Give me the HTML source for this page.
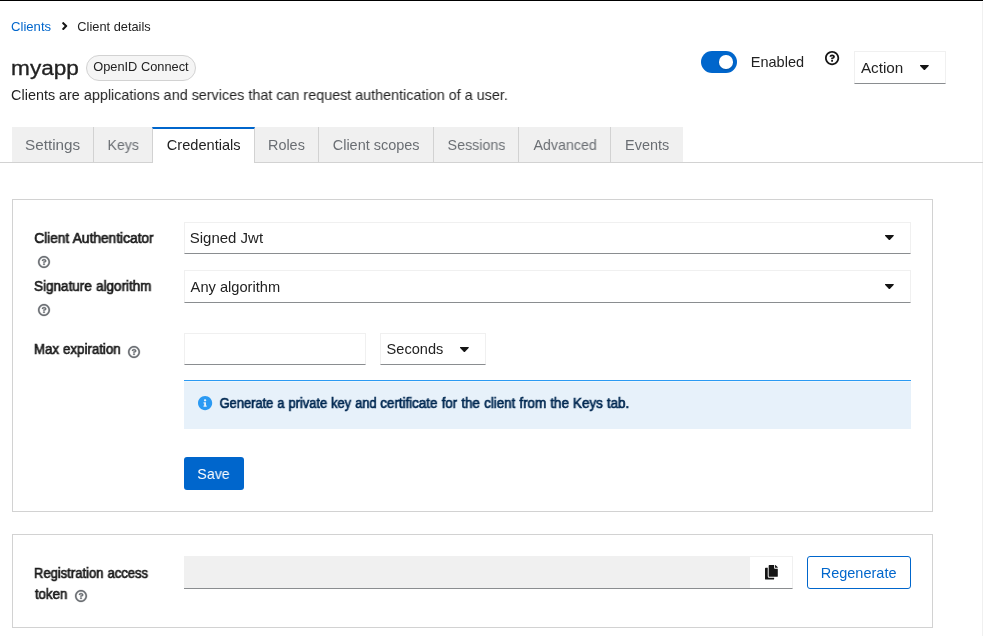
<!DOCTYPE html>
<html lang="en">
<head>
<meta charset="utf-8">
<title>Client details</title>
<style>
html,body{margin:0;padding:0;}
body{width:983px;height:636px;position:relative;overflow:hidden;background:#fff;font-family:"Liberation Sans",sans-serif;}
.t{position:absolute;white-space:nowrap;line-height:20px;transform-origin:0 0;will-change:transform;}
h1.t,p.t{margin:0;font-weight:400;}
a.t{text-decoration:none;cursor:pointer;}
.b,.i{position:absolute;box-sizing:border-box;}
.i{display:block;overflow:visible;}
.card{border:1px solid #d2d2d2;background:#fff;}
.fc{border:1px solid #f0f0f0;border-bottom:1px solid #8a8d90;background:#fff;}
.tab{background:#f0f0f0;top:127px;height:35px;border-left:1px solid #d2d2d2;}
</style>
</head>
<body>
<div class="b" style="left:0;top:0;width:983px;height:1px;background:#000"></div>
<div class="b" style="left:982px;top:2px;width:1px;height:634px;background:#f0f0f0"></div>

<!-- breadcrumb -->
<a class="t" id="bc1" style="left:9px;top:17px;padding-left:1.93px;font-size:12.2px;color:#0066cc;transform:scaleX(1.0741);">Clients</a>
<svg class="i" style="left:61.7px;top:22.1px" width="5.4" height="8.1" viewBox="24 95 208 322"><path fill="#151515" d="M224.300 273l-136 136c-9.400 9.400-24.600 9.400-33.900 0l-22.600-22.600c-9.400-9.400-9.400-24.600 0-33.900l96.400-96.400-96.400-96.400c-9.400-9.400-9.400-24.600 0-33.900L54.300 103c9.400-9.400 24.600-9.400 33.900 0l136 136c9.500 9.400 9.500 24.600.1 34z"/></svg>
<span class="t" id="bc2" style="left:76px;top:17px;padding-left:1.31px;font-size:12.2px;color:#222222;transform:scaleX(1.0508);">Client details</span>

<!-- title -->
<h1 class="t" id="ttl" style="left:9px;top:58px;padding-left:1.80px;font-size:19.6px;color:#222222;transform:scaleX(1.1535);-webkit-text-stroke:0.3px #222222;">myapp</h1>
<div class="b" style="left:86px;top:55px;width:110px;height:26px;border:1px solid #d2d2d2;border-radius:13px;background:#f5f5f5"></div>
<span class="t" id="bdg" style="left:92px;top:57px;padding-left:1.18px;font-size:12.2px;color:#222222;transform:scaleX(1.0505);">OpenID Connect</span>
<p class="t" id="dsc" style="left:10px;top:85px;padding-left:1.10px;font-size:14.4px;color:#222222;transform:scaleX(0.9983);">Clients are applications and services that can request authentication of a user.</p>

<!-- toggle -->
<div class="b" style="left:701px;top:51px;width:36px;height:21.5px;border-radius:11px;background:#0066cc"></div>
<div class="b" style="left:719.2px;top:55.3px;width:13.4px;height:13.4px;border-radius:50%;background:#fff;box-shadow:0 1px 2px rgba(3,3,3,.2)"></div>
<span class="t" id="enb" style="left:749px;top:52px;padding-left:1.72px;font-size:14.4px;color:#222222;transform:scaleX(1.0093);">Enabled</span>
<svg class="i" style="left:825.10px;top:51.00px" width="14.2" height="14.2" viewBox="0 0 1024 1024"><path fill="#151515" stroke="#151515" stroke-width="0" d="M521.3,576 C627.5,576 713.7,502 713.7,413.700 C713.700,325.400 627.600,253.600 521.300,253.600 C366,253.600 334.500,337.700 329.200,407.200 C329.200,414.300 335.200,416 343.500,416 L445,416 C450.500,416 458,415.500 460.800,406.500 C460.800,362.600 582.900,357.100 582.900,413.600 C582.900,441.900 556.200,470.900 521.300,473 C486.400,475.100 447.300,479.800 447.300,521.700 L447.300,553.800 C447.300,570.800 456.100,576 472,576 C487.900,576 521.300,576 521.300,576 M575.300,751.300 L575.300,655.300 C575.300,649.500 569.500,639.300 559.300,639.300 L463.300,639.300 C456.700,639.300 447.300,646.600 447.300,655.300 L447.300,751.300 C447.300,760.900 455.600,767.300 463.300,767.300 L559.300,767.300 C566.600,767.300 575.300,760.800 575.300,751.300 M512,896 C300.200,896 128,723.900 128,512 C128,300.300 300.200,128 512,128 C723.800,128 896,300.200 896,512 C896,723.800 723.700,896 512,896 M512.100,0 C229.700,0 0,229.800 0,512 C0,794.200 229.800,1024 512.100,1024 C794.400,1024 1024,794.300 1024,512 C1024,229.700 794.400,0 512.100,0"/></svg>

<!-- action dropdown -->
<div class="b fc" style="left:854px;top:51px;width:92px;height:33px"></div>
<span class="t" id="act" style="left:859px;top:58px;padding-left:1.81px;font-size:14.4px;color:#222222;transform:scaleX(1.0610);">Action</span>
<svg class="i" style="left:919.9px;top:65.35px" width="8.8" height="5.1" viewBox="13 190 294 172"><path fill="#151515" d="M31.3 192h257.3c17.8 0 26.7 21.5 14.1 34.1L174.1 354.8c-7.800 7.800-20.500 7.800-28.300 0L17.200 226.100C4.600 213.500 13.500 192 31.300 192z"/></svg>

<!-- tabs -->
<div class="b" style="left:0;top:162px;width:983px;height:1px;background:#d2d2d2"></div>
<div class="b tab" style="left:12px;width:81px;border-left:0"></div>
<div class="b tab" style="left:93px;width:59px"></div>
<div class="b tab" style="left:254px;width:64px"></div>
<div class="b tab" style="left:318px;width:115px"></div>
<div class="b tab" style="left:433px;width:85px"></div>
<div class="b tab" style="left:518px;width:92px"></div>
<div class="b tab" style="left:610px;width:73px"></div>
<div class="b" style="left:152px;top:127px;width:103px;height:36px;background:#fff;border-left:1px solid #d2d2d2;border-right:1px solid #d2d2d2;border-top:2px solid #0066cc"></div>
<span class="t" id="tb1" style="left:24px;top:135px;padding-left:1.03px;font-size:14.4px;color:#6a6e73;transform:scaleX(1.0602);">Settings</span><span class="t" id="tb2" style="left:106px;top:135px;padding-left:1.61px;font-size:14.4px;color:#6a6e73;transform:scaleX(0.9762);">Keys</span><span class="t" id="tb3" style="left:165px;top:135px;padding-left:1.71px;font-size:14.4px;color:#222222;transform:scaleX(1.0157);">Credentials</span><span class="t" id="tb4" style="left:267px;top:135px;padding-left:1.04px;font-size:14.4px;color:#6a6e73;transform:scaleX(0.9995);">Roles</span><span class="t" id="tb5" style="left:331px;top:135px;padding-left:1.75px;font-size:14.4px;color:#6a6e73;transform:scaleX(1.0045);">Client scopes</span><span class="t" id="tb6" style="left:446px;top:135px;padding-left:1.55px;font-size:14.4px;color:#6a6e73;transform:scaleX(0.9908);">Sessions</span><span class="t" id="tb7" style="left:532px;top:135px;padding-left:1.53px;font-size:14.4px;color:#6a6e73;transform:scaleX(0.9894);">Advanced</span><span class="t" id="tb8" style="left:624px;top:135px;padding-left:1.11px;font-size:14.4px;color:#6a6e73;transform:scaleX(1.0023);">Events</span>

<!-- card 1 -->
<div class="b card" style="left:12px;top:199px;width:921px;height:313px"></div>
<label class="t" id="lb1" style="left:33px;top:228px;padding-left:1.14px;font-size:14.0px;color:#1c1c1c;transform:scaleX(0.9803);-webkit-text-stroke:0.7px #1c1c1c;word-spacing:0.5px;">Client Authenticator</label>
<svg class="i" style="left:38.10px;top:255.90px" width="12" height="12" viewBox="0 0 1024 1024"><path fill="#6a6e73" stroke="#6a6e73" stroke-width="22" d="M521.3,576 C627.5,576 713.7,502 713.7,413.700 C713.700,325.400 627.600,253.600 521.300,253.600 C366,253.600 334.500,337.700 329.200,407.200 C329.200,414.300 335.200,416 343.500,416 L445,416 C450.500,416 458,415.500 460.800,406.500 C460.800,362.600 582.900,357.100 582.900,413.600 C582.900,441.900 556.200,470.900 521.300,473 C486.400,475.100 447.300,479.800 447.300,521.700 L447.300,553.800 C447.300,570.800 456.100,576 472,576 C487.900,576 521.300,576 521.300,576 M575.300,751.300 L575.300,655.300 C575.300,649.500 569.500,639.300 559.300,639.300 L463.300,639.300 C456.700,639.300 447.300,646.600 447.300,655.300 L447.300,751.300 C447.300,760.900 455.600,767.300 463.300,767.300 L559.300,767.300 C566.600,767.300 575.300,760.800 575.300,751.300 M512,896 C300.200,896 128,723.900 128,512 C128,300.300 300.200,128 512,128 C723.800,128 896,300.200 896,512 C896,723.800 723.700,896 512,896 M512.100,0 C229.700,0 0,229.800 0,512 C0,794.200 229.800,1024 512.100,1024 C794.400,1024 1024,794.300 1024,512 C1024,229.700 794.400,0 512.100,0"/></svg>
<div class="b fc" style="left:184px;top:222px;width:727px;height:32px"></div>
<span class="t" id="sl1" style="left:188px;top:228px;padding-left:1.72px;font-size:14.4px;color:#222222;transform:scaleX(1.0412);">Signed Jwt</span>
<svg class="i" style="left:884.9px;top:235.25px" width="8.8" height="5.1" viewBox="13 190 294 172"><path fill="#151515" d="M31.3 192h257.3c17.8 0 26.7 21.5 14.1 34.1L174.1 354.8c-7.800 7.800-20.500 7.800-28.300 0L17.200 226.100C4.600 213.500 13.500 192 31.300 192z"/></svg>
<label class="t" id="lb2" style="left:33px;top:276px;padding-left:1.10px;font-size:14.0px;color:#1c1c1c;transform:scaleX(0.9632);-webkit-text-stroke:0.7px #1c1c1c;word-spacing:0.5px;">Signature algorithm</label>
<svg class="i" style="left:38.10px;top:303.90px" width="12" height="12" viewBox="0 0 1024 1024"><path fill="#6a6e73" stroke="#6a6e73" stroke-width="22" d="M521.3,576 C627.5,576 713.7,502 713.7,413.700 C713.700,325.400 627.600,253.600 521.300,253.600 C366,253.600 334.500,337.700 329.200,407.200 C329.200,414.300 335.200,416 343.500,416 L445,416 C450.500,416 458,415.500 460.800,406.500 C460.800,362.600 582.900,357.100 582.900,413.600 C582.900,441.900 556.200,470.900 521.300,473 C486.400,475.100 447.300,479.800 447.300,521.700 L447.300,553.800 C447.300,570.800 456.100,576 472,576 C487.900,576 521.300,576 521.300,576 M575.300,751.300 L575.300,655.300 C575.300,649.500 569.500,639.300 559.300,639.300 L463.300,639.300 C456.700,639.300 447.300,646.600 447.300,655.300 L447.300,751.300 C447.300,760.900 455.600,767.300 463.300,767.300 L559.300,767.300 C566.600,767.300 575.300,760.800 575.300,751.300 M512,896 C300.200,896 128,723.900 128,512 C128,300.300 300.200,128 512,128 C723.800,128 896,300.200 896,512 C896,723.800 723.700,896 512,896 M512.100,0 C229.700,0 0,229.800 0,512 C0,794.200 229.800,1024 512.100,1024 C794.400,1024 1024,794.300 1024,512 C1024,229.700 794.400,0 512.100,0"/></svg>
<div class="b fc" style="left:184px;top:270px;width:727px;height:33px"></div>
<span class="t" id="sl2" style="left:189px;top:277px;padding-left:1.60px;font-size:14.4px;color:#222222;transform:scaleX(1.0177);">Any algorithm</span>
<svg class="i" style="left:884.9px;top:283.75px" width="8.8" height="5.1" viewBox="13 190 294 172"><path fill="#151515" d="M31.3 192h257.3c17.8 0 26.7 21.5 14.1 34.1L174.1 354.8c-7.800 7.800-20.500 7.800-28.300 0L17.200 226.100C4.600 213.500 13.500 192 31.300 192z"/></svg>
<label class="t" id="lb3" style="left:32px;top:339px;padding-left:1.97px;font-size:14.0px;color:#1c1c1c;transform:scaleX(0.9478);-webkit-text-stroke:0.7px #1c1c1c;word-spacing:0.5px;">Max expiration</label>
<svg class="i" style="left:128.20px;top:345.50px" width="12" height="12" viewBox="0 0 1024 1024"><path fill="#6a6e73" stroke="#6a6e73" stroke-width="22" d="M521.3,576 C627.5,576 713.7,502 713.7,413.700 C713.700,325.400 627.600,253.600 521.300,253.600 C366,253.600 334.500,337.700 329.200,407.200 C329.200,414.300 335.200,416 343.500,416 L445,416 C450.500,416 458,415.500 460.800,406.500 C460.800,362.600 582.900,357.100 582.900,413.600 C582.900,441.900 556.200,470.900 521.300,473 C486.400,475.100 447.300,479.800 447.300,521.700 L447.300,553.800 C447.300,570.800 456.100,576 472,576 C487.900,576 521.300,576 521.300,576 M575.300,751.300 L575.300,655.300 C575.300,649.500 569.500,639.300 559.300,639.300 L463.300,639.300 C456.700,639.300 447.300,646.600 447.300,655.300 L447.300,751.300 C447.300,760.900 455.600,767.300 463.300,767.300 L559.300,767.300 C566.600,767.300 575.300,760.800 575.300,751.300 M512,896 C300.200,896 128,723.900 128,512 C128,300.300 300.200,128 512,128 C723.800,128 896,300.200 896,512 C896,723.800 723.700,896 512,896 M512.100,0 C229.700,0 0,229.800 0,512 C0,794.200 229.800,1024 512.100,1024 C794.400,1024 1024,794.300 1024,512 C1024,229.700 794.400,0 512.100,0"/></svg>
<div class="b fc" style="left:184px;top:333px;width:182px;height:32px"></div>
<div class="b fc" style="left:380px;top:333px;width:106px;height:32px"></div>
<span class="t" id="sl3" style="left:385px;top:339px;padding-left:1.55px;font-size:14.4px;color:#222222;transform:scaleX(1.0131);">Seconds</span>
<svg class="i" style="left:459.7px;top:347.05px" width="8.8" height="5.1" viewBox="13 190 294 172"><path fill="#151515" d="M31.3 192h257.3c17.8 0 26.7 21.5 14.1 34.1L174.1 354.8c-7.800 7.800-20.500 7.800-28.300 0L17.200 226.100C4.600 213.500 13.500 192 31.300 192z"/></svg>

<!-- alert -->
<div class="b" style="left:184px;top:380px;width:727px;height:48.6px;background:#e7f1fa;border-top:1px solid #2b9af3"></div>
<div class="b" style="left:184px;top:381px;width:727px;height:1px;background:#f1f7fc"></div>
<svg class="i" style="left:198px;top:396px" width="14.2" height="14.2" viewBox="8 8 496 496"><path fill="#2b9af3" d="M256 8C119.043 8 8 119.083 8 256c0 136.997 111.043 248 248 248s248-111.003 248-248C504 119.083 392.957 8 256 8zm0 110c23.196 0 42 18.804 42 42s-18.804 42-42 42-42-18.804-42-42 18.804-42 42-42zm56 254c0 6.627-5.373 12-12 12h-88c-6.627 0-12-5.373-12-12v-24c0-6.627 5.373-12 12-12h12v-64h-12c-6.627 0-12-5.373-12-12v-24c0-6.627 5.373-12 12-12h64c6.627 0 12 5.373 12 12v100h12c6.627 0 12 5.373 12 12v24z"/></svg>
<span class="t" id="alt" style="left:218px;top:393px;padding-left:1.72px;font-size:14.0px;color:#002952;transform:scaleX(0.9192);-webkit-text-stroke:0.7px #002952;word-spacing:0.5px;">Generate a private key and</span><span class="t" id="al2" style="left:379px;top:393px;padding-left:1.36px;font-size:14.0px;color:#002952;transform:scaleX(0.9533);-webkit-text-stroke:0.7px #002952;word-spacing:0.5px;">certificate for the client from the Keys tab.</span>

<!-- save -->
<div class="b" style="left:184px;top:457px;width:60px;height:33px;border-radius:3px;background:#0066cc"></div>
<span class="t" id="sav" style="left:196px;top:464px;padding-left:1.32px;font-size:14.4px;color:#ffffff;transform:scaleX(0.9868);">Save</span>

<!-- card 2 -->
<div class="b card" style="left:12px;top:534px;width:921px;height:94px"></div>
<label class="t" id="lb4" style="left:33px;top:563px;padding-left:1.08px;font-size:14.0px;color:#1c1c1c;transform:scaleX(0.9293);-webkit-text-stroke:0.7px #1c1c1c;word-spacing:0.5px;">Registration access</label>
<label class="t" id="lb5" style="left:33px;top:584px;padding-left:1.91px;font-size:14.0px;color:#1c1c1c;transform:scaleX(0.9532);-webkit-text-stroke:0.7px #1c1c1c;word-spacing:0.5px;">token</label>
<svg class="i" style="left:75.10px;top:589.80px" width="12" height="12" viewBox="0 0 1024 1024"><path fill="#6a6e73" stroke="#6a6e73" stroke-width="22" d="M521.3,576 C627.5,576 713.7,502 713.7,413.700 C713.700,325.400 627.600,253.600 521.300,253.600 C366,253.600 334.500,337.700 329.200,407.200 C329.200,414.300 335.200,416 343.500,416 L445,416 C450.500,416 458,415.500 460.800,406.500 C460.800,362.600 582.900,357.100 582.900,413.600 C582.900,441.900 556.200,470.900 521.300,473 C486.400,475.100 447.300,479.800 447.300,521.700 L447.300,553.800 C447.300,570.800 456.100,576 472,576 C487.900,576 521.300,576 521.300,576 M575.300,751.300 L575.300,655.300 C575.300,649.500 569.500,639.300 559.300,639.300 L463.300,639.300 C456.700,639.300 447.300,646.600 447.300,655.300 L447.300,751.300 C447.300,760.900 455.600,767.300 463.300,767.300 L559.300,767.300 C566.600,767.300 575.300,760.800 575.300,751.300 M512,896 C300.200,896 128,723.900 128,512 C128,300.300 300.200,128 512,128 C723.800,128 896,300.200 896,512 C896,723.800 723.700,896 512,896 M512.100,0 C229.700,0 0,229.800 0,512 C0,794.200 229.800,1024 512.100,1024 C794.400,1024 1024,794.300 1024,512 C1024,229.700 794.400,0 512.100,0"/></svg>
<div class="b" style="left:184px;top:556px;width:566px;height:33px;background:#f0f0f0;border-bottom:1px solid #8a8d90"></div>
<div class="b fc" style="left:750px;top:556px;width:43px;height:33px;border-left:0"></div>
<svg class="i" style="left:765px;top:564.8px" width="12.8" height="14.6" viewBox="0 0 448 512"><path fill="#151515" d="M320 448v40c0 13.255-10.745 24-24 24H24c-13.255 0-24-10.745-24-24V120c0-13.255 10.745-24 24-24h72v296c0 30.879 25.121 56 56 56h168zm0-344V0H152c-13.255 0-24 10.745-24 24v368c0 13.255 10.745 24 24 24h272c13.255 0 24-10.745 24-24V128H344c-13.200 0-24-10.800-24-24zm120.971-31.029L375.029 7.029A24 24 0 0 0 358.059 0H352v96h96v-6.059a24 24 0 0 0-7.029-16.970z"/></svg>
<div class="b" style="left:807px;top:556px;width:104px;height:33px;border:1px solid #0066cc;border-radius:3px;background:#fff"></div>
<span class="t" id="rgn" style="left:819px;top:563px;padding-left:1.69px;font-size:14.4px;color:#0066cc;transform:scaleX(1.0075);">Regenerate</span>
</body>
</html>
